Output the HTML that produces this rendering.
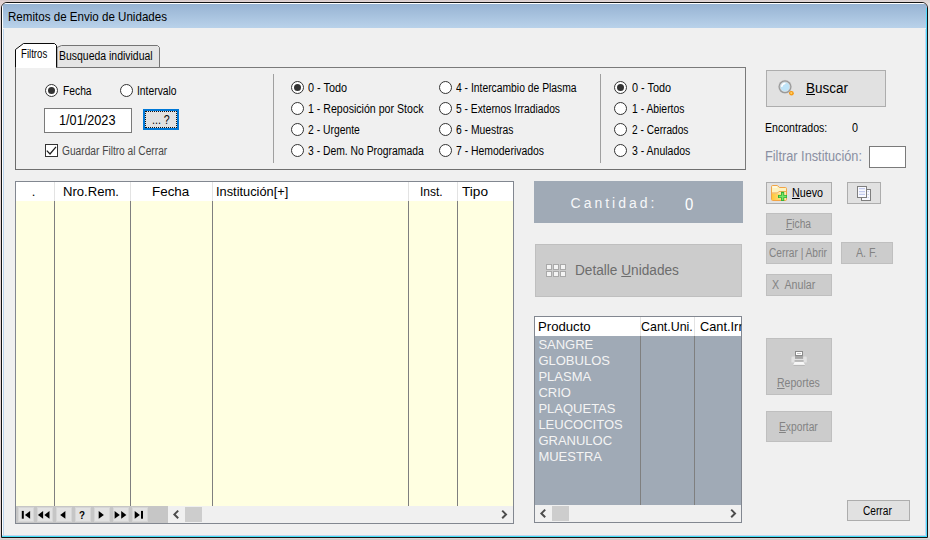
<!DOCTYPE html>
<html lang="es"><head><meta charset="utf-8"><title>Remitos de Envio de Unidades</title>
<style>
*{box-sizing:border-box;margin:0;padding:0}
html,body{width:930px;height:540px;overflow:hidden}
body{background:linear-gradient(90deg,#e2d2d2,#e0d6d6);font-family:"Liberation Sans",sans-serif;position:relative}
.a{position:absolute}
#texts .t{position:absolute;white-space:nowrap;line-height:1;transform-origin:0 50%;display:block}
#texts u{text-decoration:underline;text-underline-offset:1px}
#win{left:1px;top:2px;width:927px;height:536px;background:#f0f0f0;border:1px solid #141414;border-radius:6px 6px 0 0;overflow:hidden}
#title{left:0;top:0;width:925px;height:25px;background:linear-gradient(#97b3d3,#b9d2ea);border-top:1px solid #fff}
.rb{width:13px;height:13px;border:1px solid #333;border-radius:50%;background:#fff}
.rb.on::after{content:"";position:absolute;left:2px;top:2px;width:7px;height:7px;border-radius:50%;background:#333}
.btn{background:#e1e1e1;border:1px solid #adadad}
.dis{background:#ccc;border:1px solid #bfbfbf}
.vl{width:1px;background:#7f7f7f}
.hl{width:1px;background:#e3e3e3}
.nb{width:16px;height:15px;background:#e2e2e2;border:1px solid #d6d6d6;top:507px}

</style></head><body>
<div class="a" style="left:0;top:0;width:930px;height:1px;background:linear-gradient(90deg,#d8caca,#dcd2d2)"></div>
<div class="a" style="left:0;top:539px;width:930px;height:1px;background:#d8caca"></div>
<div class="a" style="left:928px;top:3px;width:2px;height:534px;background:#e8e1e1"></div>
<div id="win" class="a">
  <div id="title" class="a"></div>
  <div class="a" style="left:0;top:1px;width:1px;height:533px;background:#fff"></div>
  <div class="a" style="left:1px;top:26px;width:1px;height:508px;background:#bcd4ec"></div>
  <div class="a" style="left:0;top:532px;width:925px;height:1px;background:#c4d4ec"></div>
  <div class="a" style="left:0;top:533px;width:925px;height:1px;background:#40e0f8"></div>
  <div class="a" style="left:923px;top:26px;width:1px;height:507px;background:#c4d8f0"></div>
  <div class="a" style="left:924px;top:5px;width:1px;height:529px;background:#4fdcff"></div>
</div>

<!-- tab panel -->
<div class="a" style="left:15px;top:67px;width:731px;height:103px;border:1px solid #7a7a7a;border-left-color:#6c6c6c;border-bottom-color:#6f6f6f"></div>
<svg class="a" style="left:14px;top:42px" width="150" height="28" viewBox="0 0 150 28">
  <path d="M43 25.5 V5.5 L47.5 3.5 H143.5 L145.5 5.5 V25.5Z" fill="#e5e5e5" stroke="#747474" stroke-width="1"/>
  <path d="M1.5 26 V7.5 L9.5 1.5 H40.5 L42.5 3.5 V26Z" fill="#fff"/>
  <path d="M1.5 25.5 V7.5 L9.5 1.5 H40.5 L42.5 3.5 V25.5" fill="none" stroke="#0a0a0a" stroke-width="1"/>
</svg>

<!-- group 1 -->
<div class="a rb on" style="left:45px;top:84px"></div>
<div class="a rb" style="left:120px;top:84px"></div>
<div class="a" style="left:44px;top:108px;width:88px;height:25px;background:#fff;border:1px solid #7a7a7a"></div>
<div class="a" style="left:143px;top:109px;width:36px;height:21px;background:#e1e1e1;border:2px solid #0078d7"></div>
<div class="a" style="left:145px;top:111px;width:32px;height:17px;border:1px dotted #111"></div>
<div class="a" style="left:45px;top:144px;width:13px;height:13px;background:#fff;border:1px solid #333"></div>
<svg class="a" style="left:45px;top:144px" width="13" height="13" viewBox="0 0 13 13"><path d="M1.8 6.6 L5 10 L11 2.9" fill="none" stroke="#1c1c1c" stroke-width="1.25"/></svg>
<div class="a" style="left:273px;top:74px;width:1px;height:89px;background:#a0a0a0"></div>
<div class="a" style="left:600px;top:74px;width:1px;height:89px;background:#a0a0a0"></div>

<!-- group 2 radios -->
<div class="a rb on" style="left:291px;top:81px"></div>
<div class="a rb" style="left:291px;top:102px"></div>
<div class="a rb" style="left:291px;top:123px"></div>
<div class="a rb" style="left:291px;top:144px"></div>
<div class="a rb" style="left:439px;top:81px"></div>
<div class="a rb" style="left:439px;top:102px"></div>
<div class="a rb" style="left:439px;top:123px"></div>
<div class="a rb" style="left:439px;top:144px"></div>
<div class="a rb on" style="left:614px;top:81px"></div>
<div class="a rb" style="left:614px;top:102px"></div>
<div class="a rb" style="left:614px;top:123px"></div>
<div class="a rb" style="left:614px;top:144px"></div>

<!-- Buscar -->
<div class="a btn" style="left:766px;top:70px;width:120px;height:37px"></div>
<svg class="a" style="left:776px;top:78px" width="20" height="20" viewBox="0 0 20 20">
  <line x1="13.2" y1="13" x2="15.4" y2="15.2" stroke="#f59a16" stroke-width="3" stroke-linecap="round"/>
  <circle cx="15.5" cy="15.3" r="2.3" fill="#f59a16"/>
  <circle cx="15.3" cy="15.1" r="1.1" fill="#ffcf63"/>
  <circle cx="9" cy="8.8" r="7.1" fill="#d6d6d6"/>
  <circle cx="9" cy="8.8" r="6.5" fill="#9a9a9a"/>
  <circle cx="9" cy="8.8" r="4.8" fill="#bfe4f8"/>
  <circle cx="9" cy="8.8" r="4.8" fill="none" stroke="#e4e4e4" stroke-width="0.7"/>
  <path d="M5.8 8.3 A3.4 3.4 0 0 1 8.9 5.4" fill="none" stroke="#fff" stroke-width="1.5" stroke-linecap="round"/>
</svg>
<div class="a" style="left:869px;top:146px;width:37px;height:22px;background:#fff;border:1px solid #7a7a7a"></div>

<!-- main grid -->
<div class="a" style="left:15px;top:181px;width:499px;height:343px;background:#ffffe1;border:1px solid #828790"></div>
<div class="a" style="left:16px;top:182px;width:497px;height:19px;background:#fff"></div>
<div class="a hl" style="left:54px;top:182px;height:19px"></div>
<div class="a hl" style="left:130px;top:182px;height:19px"></div>
<div class="a hl" style="left:212px;top:182px;height:19px"></div>
<div class="a hl" style="left:408px;top:182px;height:19px"></div>
<div class="a hl" style="left:457px;top:182px;height:19px"></div>
<div class="a vl" style="left:54px;top:201px;height:305px"></div>
<div class="a vl" style="left:130px;top:201px;height:305px"></div>
<div class="a vl" style="left:212px;top:201px;height:305px"></div>
<div class="a vl" style="left:408px;top:201px;height:305px"></div>
<div class="a vl" style="left:457px;top:201px;height:305px"></div>
<!-- navigator -->
<div class="a" style="left:16px;top:506px;width:497px;height:17px;background:#f0f0f0"></div>
<div class="a" style="left:16px;top:506px;width:152px;height:17px;background:#c6c6c6"></div>
<div class="a nb" style="left:18px"></div>
<div class="a nb" style="left:37px"></div>
<div class="a nb" style="left:56px"></div>
<div class="a nb" style="left:75px"></div>
<div class="a nb" style="left:94px"></div>
<div class="a nb" style="left:113px"></div>
<div class="a nb" style="left:132px"></div>
<svg class="a" style="left:16px;top:506px" width="152" height="17" viewBox="0 0 152 17">
  <g fill="#000">
    <rect x="5.8" y="4.9" width="2" height="7.8"/><path d="M14.1 4.9 V12.7 L8.9 8.9Z"/>
    <path d="M27.1 4.9 V12.7 L21.9 8.9Z"/><path d="M33.5 4.9 V12.7 L28.3 8.9Z"/>
    <path d="M49.4 4.9 V12.7 L44.2 8.9Z"/>
    <path d="M82.7 4.9 V12.7 L87.9 8.9Z"/>
    <path d="M98.6 4.9 V12.7 L103.8 8.9Z"/><path d="M105.2 4.9 V12.7 L110.4 8.9Z"/>
    <path d="M118.7 4.9 V12.7 L123.9 8.9Z"/><rect x="125" y="4.9" width="2" height="7.8"/>
  </g>
</svg>
<div class="a" style="left:185px;top:507px;width:17px;height:15px;background:#cdcdcd"></div>
<svg class="a" style="left:170px;top:506px" width="12" height="17" viewBox="0 0 12 17"><path d="M8.2 4.6 L4.4 8.4 L8.2 12.2" fill="none" stroke="#4c4c4c" stroke-width="2"/></svg>
<svg class="a" style="left:498px;top:506px" width="12" height="17" viewBox="0 0 12 17"><path d="M4.2 4.6 L8 8.4 L4.2 12.2" fill="none" stroke="#4c4c4c" stroke-width="2"/></svg>

<!-- Cantidad -->
<div class="a" style="left:534px;top:181px;width:209px;height:42px;background:#a0aab6"></div>
<!-- Detalle -->
<div class="a dis" style="left:535px;top:244px;width:207px;height:53px"></div>
<svg class="a" style="left:546px;top:264px" width="21" height="14" viewBox="0 0 21 14">
  <g fill="#f4f4f4" stroke="#a9a9a9" stroke-width="1">
    <rect x="0.5" y="0.5" width="5" height="5"/><rect x="7.5" y="0.5" width="5" height="5"/><rect x="14.5" y="0.5" width="5" height="5"/>
    <rect x="0.5" y="7.5" width="5" height="5"/><rect x="7.5" y="7.5" width="5" height="5"/><rect x="14.5" y="7.5" width="5" height="5"/>
  </g>
</svg>

<!-- product grid -->
<div class="a" style="left:534px;top:316px;width:208px;height:207px;background:#a0aab6;border:1px solid #828790"></div>
<div class="a" style="left:535px;top:317px;width:206px;height:19px;background:#fff"></div>
<div class="a hl" style="left:640px;top:317px;height:19px"></div>
<div class="a hl" style="left:694px;top:317px;height:19px"></div>
<div class="a vl" style="left:640px;top:336px;height:169px"></div>
<div class="a vl" style="left:694px;top:336px;height:169px"></div>
<div class="a" style="left:535px;top:505px;width:206px;height:17px;background:#f0f0f0"></div>
<div class="a" style="left:552px;top:506px;width:17px;height:15px;background:#cdcdcd"></div>
<svg class="a" style="left:537px;top:505px" width="12" height="17" viewBox="0 0 12 17"><path d="M8.2 4.6 L4.4 8.4 L8.2 12.2" fill="none" stroke="#4c4c4c" stroke-width="2"/></svg>
<svg class="a" style="left:727px;top:505px" width="12" height="17" viewBox="0 0 12 17"><path d="M4.2 4.6 L8 8.4 L4.2 12.2" fill="none" stroke="#4c4c4c" stroke-width="2"/></svg>

<!-- right buttons -->
<div class="a btn" style="left:766px;top:182px;width:66px;height:22px"></div>
<svg class="a" style="left:771px;top:185px" width="16" height="16" viewBox="0 0 16 16">
  <defs><linearGradient id="fg" x1="0" y1="0" x2="1" y2="0"><stop offset="0" stop-color="#ffc93c"/><stop offset="1" stop-color="#ffe9a4"/></linearGradient></defs>
  <path d="M0.5 1.6 Q0.5 0.5 1.6 0.5 H6.4 L8.4 2.5 H14.4 Q15.5 2.5 15.5 3.6 V14.4 Q15.5 15.5 14.4 15.5 H1.6 Q0.5 15.5 0.5 14.4Z" fill="#fdf2c0" stroke="#f2a445"/>
  <path d="M1.5 2 H6" stroke="#fff" stroke-width="1"/>
  <path d="M1 8.5 H15 V15 H1Z" fill="url(#fg)"/>
  <path d="M0.5 8 H6.6 L7.8 6.6 H15" fill="none" stroke="#f0a54a" stroke-width="1"/>
  <path d="M11.6 6.8 V16 M7 11.5 H16" stroke="#36b236" stroke-width="3.2"/>
  <path d="M11.6 8 V15 M8 11.5 H15.2" stroke="#79e46a" stroke-width="1.4"/>
</svg>
<div class="a btn" style="left:847px;top:182px;width:34px;height:22px"></div>
<svg class="a" style="left:857px;top:186px" width="15" height="16" viewBox="0 0 15 16">
  <rect x="4.5" y="3.5" width="9" height="11" fill="#f7f8fd" stroke="#7e7e7e"/>
  <path d="M10.5 5.5H12M10.5 8.5H12M10.5 11.5H12" stroke="#ccd3f0" stroke-width="1"/>
  <rect x="0.5" y="0.5" width="9" height="11" fill="#f9faff" stroke="#7e7e7e"/>
  <path d="M2 2.6H8M2 5.6H8M2 8.4H8" stroke="#c3cbee" stroke-width="1.2"/>
</svg>
<div class="a dis" style="left:766px;top:213px;width:66px;height:22px"></div>
<div class="a dis" style="left:766px;top:242px;width:66px;height:22px"></div>
<div class="a dis" style="left:841px;top:242px;width:52px;height:22px"></div>
<div class="a dis" style="left:766px;top:274px;width:66px;height:22px"></div>
<div class="a dis" style="left:766px;top:338px;width:66px;height:57px"></div>
<svg class="a" style="left:791px;top:350px" width="17" height="17" viewBox="0 0 17 17">
  <rect x="4" y="5.6" width="8.2" height="3.2" fill="#a6a6a6"/>
  <rect x="4.5" y="1.5" width="7" height="4" fill="#fff" stroke="#8a8a8a"/>
  <path d="M6 3.5H10" stroke="#c4c4c4" stroke-width="1"/>
  <path d="M0.4 7.8 Q0.4 6.4 2 6.4 H4 V9 H12.2 V6.4 H14.2 Q15.8 6.4 15.8 7.8 V12.6 H0.4Z" fill="#e2e2e2"/>
  <path d="M4 11.5 H12.2 L14.2 15.2 H2Z" fill="#f8f8f8"/>
  <path d="M3.6 11 H12.6" stroke="#8e8e8e" stroke-width="1"/>
  <path d="M2.4 15.4 H13.8" stroke="#b0b0b0" stroke-width="0.9"/>
</svg>
<div class="a dis" style="left:766px;top:411px;width:66px;height:31px"></div>
<div class="a btn" style="left:847px;top:500px;width:63px;height:21px"></div>

<div id="texts">
<span class="t" id="t0" style="left:8px;top:10.96px;font-size:12.1px;color:#000;transform:scaleX(0.9575);">Remitos de Envio de Unidades</span>
<span class="t" id="t1" style="left:21.1px;top:47.94px;font-size:12px;color:#000;transform:scaleX(0.8019);">Filtros</span>
<span class="t" id="t2" style="left:58.6px;top:49.74px;font-size:12px;color:#000;transform:scaleX(0.8713);">Busqueda individual</span>
<span class="t" id="t3" style="left:62.5px;top:85.04px;font-size:12px;color:#000;transform:scaleX(0.8573);">Fecha</span>
<span class="t" id="t4" style="left:137.2px;top:85.04px;font-size:12px;color:#000;transform:scaleX(0.8603);">Intervalo</span>
<span class="t" id="t5" style="left:59.4px;top:113.38px;font-size:14.2px;color:#000;transform:scaleX(0.8950);">1/01/2023</span>
<span class="t" id="t6" style="left:152.2px;top:113.84px;font-size:12px;color:#000;transform:scaleX(0.8893);">... ?</span>
<span class="t" id="t7" style="left:61.8px;top:145.04px;font-size:12px;color:#484848;transform:scaleX(0.8482);">Guardar Filtro al Cerrar</span>
<span class="t" id="t8" style="left:308.3px;top:81.74px;font-size:12px;color:#000;transform:scaleX(0.9060);">0 - Todo</span>
<span class="t" id="t9" style="left:308.3px;top:102.74px;font-size:12px;color:#000;transform:scaleX(0.8835);">1 - Reposición por Stock</span>
<span class="t" id="t10" style="left:308.3px;top:123.74px;font-size:12px;color:#000;transform:scaleX(0.8629);">2 - Urgente</span>
<span class="t" id="t11" style="left:308.3px;top:144.74px;font-size:12px;color:#000;transform:scaleX(0.8630);">3 - Dem. No Programada</span>
<span class="t" id="t12" style="left:456.1px;top:81.74px;font-size:12px;color:#000;transform:scaleX(0.8610);">4 - Intercambio de Plasma</span>
<span class="t" id="t13" style="left:456.1px;top:102.74px;font-size:12px;color:#000;transform:scaleX(0.8567);">5 - Externos Irradiados</span>
<span class="t" id="t14" style="left:456.1px;top:123.74px;font-size:12px;color:#000;transform:scaleX(0.8607);">6 - Muestras</span>
<span class="t" id="t15" style="left:456.1px;top:144.74px;font-size:12px;color:#000;transform:scaleX(0.8679);">7 - Hemoderivados</span>
<span class="t" id="t16" style="left:632px;top:81.74px;font-size:12px;color:#000;transform:scaleX(0.9060);">0 - Todo</span>
<span class="t" id="t17" style="left:632px;top:102.74px;font-size:12px;color:#000;transform:scaleX(0.8632);">1 - Abiertos</span>
<span class="t" id="t18" style="left:632px;top:123.74px;font-size:12px;color:#000;transform:scaleX(0.8455);">2 - Cerrados</span>
<span class="t" id="t19" style="left:632px;top:144.74px;font-size:12px;color:#000;transform:scaleX(0.8738);">3 - Anulados</span>
<span class="t" id="t20" style="left:806px;top:81.15px;font-size:14px;color:#000;transform:scaleX(0.9638);"><u>B</u>uscar</span>
<span class="t" id="t21" style="left:765.3px;top:122.14px;font-size:12px;color:#000;transform:scaleX(0.8810);">Encontrados:</span>
<span class="t" id="t22" style="left:852px;top:122.14px;font-size:12px;color:#000;transform:scaleX(0.8972);">0</span>
<span class="t" id="t23" style="left:765.3px;top:148.95px;font-size:14px;color:#8a8fa2;transform:scaleX(0.9100);">Filtrar Institución:</span>
<span class="t" id="t24" style="left:31.8px;top:185.20px;font-size:13px;color:#000;">.</span>
<span class="t" id="t25" style="left:79.2px;top:509.53px;font-size:10.6px;color:#000;transform:scaleX(0.9253);"><b>?</b></span>
<span class="t" id="t26" style="left:63.3px;top:185.20px;font-size:13px;color:#000;transform:scaleX(1.0067);">Nro.Rem.</span>
<span class="t" id="t27" style="left:151.7px;top:185.20px;font-size:13px;color:#000;transform:scaleX(1.0321);">Fecha</span>
<span class="t" id="t28" style="left:216px;top:185.20px;font-size:13px;color:#000;transform:scaleX(0.9856);">Institución[+]</span>
<span class="t" id="t29" style="left:420px;top:185.20px;font-size:13px;color:#000;transform:scaleX(0.9236);">Inst.</span>
<span class="t" id="t30" style="left:462.3px;top:185.20px;font-size:13px;color:#000;transform:scaleX(1.0479);">Tipo</span>
<span class="t" id="t31" style="left:570.6px;top:196.25px;font-size:14px;color:#f6f7f9;letter-spacing:2.98px;">Cantidad:</span>
<span class="t" id="t32" style="left:684.5px;top:196.55px;font-size:16.6px;color:#fff;transform:scaleX(0.8988);">0</span>
<span class="t" id="t33" style="left:575.4px;top:263.45px;font-size:14px;color:#6d6d6d;transform:scaleX(0.9743);">Detalle <u>U</u>nidades</span>
<span class="t" id="t34" style="left:538.4px;top:320.30px;font-size:13px;color:#000;transform:scaleX(1.0125);">Producto</span>
<span class="t" id="t35" style="left:640.7px;top:320.30px;font-size:13px;color:#000;transform:scaleX(0.9557);">Cant.Uni.</span>
<span class="t" id="t36" style="left:699.5px;top:320.30px;font-size:13px;color:#000;transform:scaleX(0.9838);width:42.18px;overflow:hidden;">Cant.Irr.</span>
<span class="t" id="t37" style="left:538.4px;top:337.60px;font-size:13px;color:#f4f4f4;">SANGRE</span>
<span class="t" id="t38" style="left:538.4px;top:353.60px;font-size:13px;color:#f4f4f4;">GLOBULOS</span>
<span class="t" id="t39" style="left:538.4px;top:369.60px;font-size:13px;color:#f4f4f4;">PLASMA</span>
<span class="t" id="t40" style="left:538.4px;top:385.60px;font-size:13px;color:#f4f4f4;">CRIO</span>
<span class="t" id="t41" style="left:538.4px;top:401.60px;font-size:13px;color:#f4f4f4;">PLAQUETAS</span>
<span class="t" id="t42" style="left:538.4px;top:417.60px;font-size:13px;color:#f4f4f4;">LEUCOCITOS</span>
<span class="t" id="t43" style="left:538.4px;top:433.60px;font-size:13px;color:#f4f4f4;">GRANULOC</span>
<span class="t" id="t44" style="left:538.4px;top:449.60px;font-size:13px;color:#f4f4f4;">MUESTRA</span>
<span class="t" id="t45" style="left:792.1px;top:187.04px;font-size:12px;color:#000;transform:scaleX(0.8933);"><u>N</u>uevo</span>
<span class="t" id="t46" style="left:786px;top:218.04px;font-size:12px;color:#838383;transform:scaleX(0.8515);"><u>F</u>icha</span>
<span class="t" id="t47" style="left:769.3px;top:247.04px;font-size:12px;color:#838383;transform:scaleX(0.8471);">Cerrar | Abrir</span>
<span class="t" id="t48" style="left:856px;top:247.04px;font-size:12px;color:#838383;transform:scaleX(0.8869);">A. F.</span>
<span class="t" id="t49" style="left:771.7px;top:279.04px;font-size:12px;color:#838383;transform:scaleX(0.8891);">X&nbsp; Anular</span>
<span class="t" id="t50" style="left:776.7px;top:377.24px;font-size:12px;color:#838383;transform:scaleX(0.8788);"><u>R</u>eportes</span>
<span class="t" id="t51" style="left:778.7px;top:420.64px;font-size:12px;color:#838383;transform:scaleX(0.8551);"><u>E</u>xportar</span>
<span class="t" id="t52" style="left:863.2px;top:504.74px;font-size:12px;color:#000;transform:scaleX(0.8467);">Cerrar</span>
</div>
</body></html>
